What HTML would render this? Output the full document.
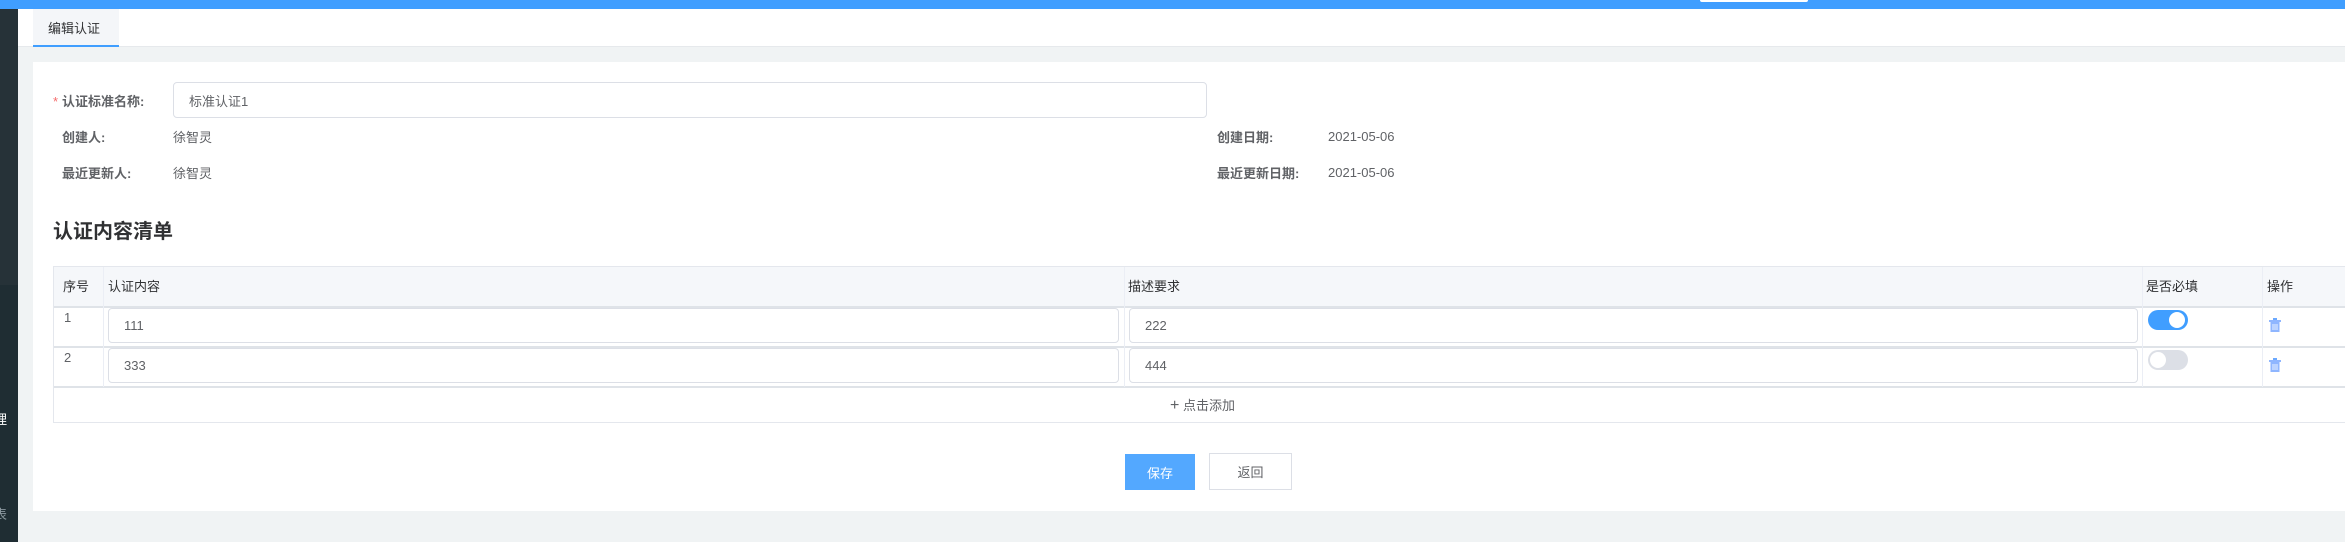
<!DOCTYPE html>
<html><head><meta charset="utf-8"><style>
*{margin:0;padding:0;box-sizing:border-box}
body{width:2345px;height:542px;overflow:hidden;background:#f0f3f4;font-family:"Liberation Sans","Noto Sans CJK SC",sans-serif;font-size:13px;color:#606266;position:relative}
.a{position:absolute}
.inp{position:absolute;border:1px solid #dcdfe6;border-radius:4px;background:#fff;color:#606266;padding-left:15px;display:flex;align-items:center}
.t{position:absolute;white-space:nowrap;line-height:20px}
</style></head><body>
<div class="a" style="left:0;top:0;width:2345px;height:9px;background:#409eff"></div>
<div class="a" style="left:1700px;top:0;width:108px;height:2px;background:#fff;border-radius:0 0 3px 3px"></div>
<div class="a" style="left:0;top:9px;width:18px;height:533px;background:#263238"></div>
<div class="a" style="left:0;top:285px;width:18px;height:257px;background:#1f2d33"></div>
<div class="t" style="left:-6px;top:410px;color:#fff;font-size:13px">理</div>
<div class="t" style="left:-6px;top:505px;color:#8a979e;font-size:13px">表</div>
<div class="a" style="left:18px;top:9px;width:2327px;height:38px;background:#fff;border-bottom:1px solid #e6e9ec"></div>
<div class="a" style="left:33px;top:9px;width:86px;height:38px;background:#f4f6f9;border-bottom:2px solid #409eff"></div>
<div class="t" style="left:48px;top:19px;color:#303133">编辑认证</div>
<div class="a" style="left:33px;top:62px;width:2312px;height:449px;background:#fff"></div>
<div class="t" style="left:53px;top:92px;color:#f56c6c">*</div>
<div class="t" style="left:62px;top:92px;font-weight:bold">认证标准名称:</div>
<div class="inp" style="left:173px;top:82px;width:1034px;height:36px">标准认证1</div>
<div class="t" style="left:62px;top:128px;font-weight:bold">创建人:</div>
<div class="t" style="left:173px;top:128px">徐智灵</div>
<div class="t" style="left:62px;top:164px;font-weight:bold">最近更新人:</div>
<div class="t" style="left:173px;top:164px">徐智灵</div>
<div class="t" style="left:1217px;top:128px;font-weight:bold">创建日期:</div>
<div class="t" style="left:1328px;top:127px">2021-05-06</div>
<div class="t" style="left:1217px;top:164px;font-weight:bold">最近更新日期:</div>
<div class="t" style="left:1328px;top:163px">2021-05-06</div>
<div class="t" style="left:53px;top:220px;font-size:20px;line-height:24px;font-weight:bold;color:#303133">认证内容清单</div>
<div class="a" style="left:53px;top:266px;width:2292px;height:157px;border:1px solid #e4e7ed;border-right:none"></div>
<div class="a" style="left:54px;top:267px;width:2291px;height:39px;background:#f5f7fa"></div>
<div class="a" style="left:54px;top:306px;width:2291px;height:2px;background:#dfe3e8"></div>
<div class="a" style="left:54px;top:346px;width:2291px;height:2px;background:#dfe3e8"></div>
<div class="a" style="left:54px;top:386px;width:2291px;height:2px;background:#dfe3e8"></div>
<div class="a" style="left:103px;top:267px;width:1px;height:120px;background:#ebeef5"></div>
<div class="a" style="left:1124px;top:267px;width:1px;height:120px;background:#ebeef5"></div>
<div class="a" style="left:2142px;top:267px;width:1px;height:120px;background:#ebeef5"></div>
<div class="a" style="left:2262px;top:267px;width:1px;height:120px;background:#ebeef5"></div>
<div class="t" style="left:63px;top:277px;color:#303133">序号</div>
<div class="t" style="left:108px;top:277px;color:#303133">认证内容</div>
<div class="t" style="left:1128px;top:277px;color:#303133">描述要求</div>
<div class="t" style="left:2146px;top:277px;color:#303133">是否必填</div>
<div class="t" style="left:2267px;top:277px;color:#303133">操作</div>
<div class="t" style="left:64px;top:308px">1</div>
<div class="t" style="left:64px;top:348px">2</div>
<div class="inp" style="left:108px;top:308px;width:1011px;height:35px">111</div>
<div class="inp" style="left:1129px;top:308px;width:1009px;height:35px">222</div>
<div class="inp" style="left:108px;top:348px;width:1011px;height:35px">333</div>
<div class="inp" style="left:1129px;top:348px;width:1009px;height:35px">444</div>
<div class="a" style="left:2148px;top:310px;width:40px;height:20px;border-radius:10px;background:#409eff"><div class="a" style="left:21px;top:2px;width:16px;height:16px;border-radius:50%;background:#fff"></div></div>
<div class="a" style="left:2148px;top:350px;width:40px;height:20px;border-radius:10px;background:#dcdfe6"><div class="a" style="left:2px;top:2px;width:16px;height:16px;border-radius:50%;background:#fff"></div></div>
<svg class="a" style="left:2269px;top:318px" width="12" height="14" viewBox="0 0 12 14"><rect x="4" y="0" width="4" height="2" fill="#6aa8ff"/><rect x="0" y="2" width="12" height="2" fill="#8fb6ff"/><rect x="1.5" y="4" width="9" height="10" fill="#8fb6ff"/><path d="M4 6v6M6 6v6M8 6v6" stroke="#fff" stroke-width="0.8"/></svg>
<svg class="a" style="left:2269px;top:358px" width="12" height="14" viewBox="0 0 12 14"><rect x="4" y="0" width="4" height="2" fill="#6aa8ff"/><rect x="0" y="2" width="12" height="2" fill="#8fb6ff"/><rect x="1.5" y="4" width="9" height="10" fill="#8fb6ff"/><path d="M4 6v6M6 6v6M8 6v6" stroke="#fff" stroke-width="0.8"/></svg>
<div class="t" style="left:1170px;top:396px;color:#606266"><span style="font-size:16px;color:#606266">+</span> 点击添加</div>
<div class="a" style="left:1125px;top:454px;width:70px;height:36px;background:#53a8ff;color:#fff;display:flex;align-items:center;justify-content:center">保存</div>
<div class="a" style="left:1209px;top:453px;width:83px;height:37px;background:#fff;border:1px solid #dcdfe6;color:#606266;display:flex;align-items:center;justify-content:center">返回</div>
</body></html>
